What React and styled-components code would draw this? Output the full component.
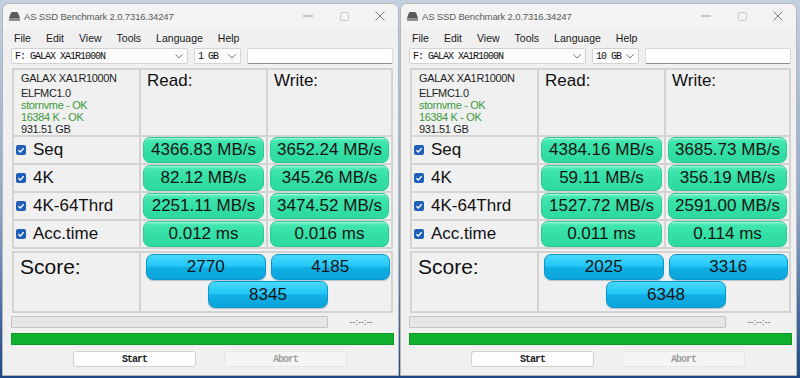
import React from "react";
import styled, { createGlobalStyle } from "styled-components";

const GlobalStyle = createGlobalStyle`
  html, body { margin: 0; padding: 0; }
  body {
    width: 800px;
    height: 378px;
    overflow: hidden;
    background: linear-gradient(180deg, #c3d0e0 0%, #8fa8c9 55%, #1d4785 100%);
    font-family: "Liberation Sans", Arial, sans-serif;
  }
`;

const Desktop = styled.div`
  display: flex;
  gap: 1px;
  padding: 3px 0 0 2px;
  height: 378px;
  box-sizing: border-box;
`;

const Window = styled.div`
  width: 397px;
  height: 373px;
  box-sizing: border-box;
  border: 1px solid #b6b6b6;
  border-radius: 7px 7px 0 0;
  background: #f0f0f0;
  display: flex;
  flex-direction: column;
  overflow: hidden;
`;

const TitleBar = styled.div`
  height: 24px;
  flex: none;
  display: flex;
  align-items: center;
  padding-left: 5px;
  background: #f3f3f3;
`;

const TitleText = styled.span`
  margin-left: 3px;
  font-size: 9.5px;
  letter-spacing: -0.15px;
  color: #5a5a5a;
  white-space: nowrap;
`;

const WindowControls = styled.div`
  margin-left: auto;
  display: flex;
  height: 100%;
`;

const ControlButton = styled.div`
  width: 36px;
  height: 100%;
  display: flex;
  align-items: center;
  justify-content: center;
`;

const MenuBar = styled.div`
  height: 19px;
  flex: none;
  display: flex;
  align-items: center;
  gap: 15px;
  padding-left: 11px;
  font-size: 10.5px;
  color: #1a1a1a;
`;

const MenuItem = styled.span``;

const SelectRow = styled.div`
  height: 16px;
  flex: none;
  margin-top: 1px;
  display: flex;
  gap: 6px;
  padding: 0 5px 0 8px;
`;

const Combo = styled.div`
  width: ${(p) => p.$w}px;
  height: 16px;
  box-sizing: border-box;
  border: 1px solid #d2d2d2;
  border-radius: 2px;
  background: #fcfcfc;
  display: flex;
  align-items: center;
  justify-content: space-between;
  padding: 0 4px 0 3px;
  font-family: "Liberation Mono", monospace;
  font-size: 10px;
  letter-spacing: -1px;
  color: #111;
  white-space: nowrap;
`;

const TextField = styled.div`
  flex: 1;
  height: 16px;
  box-sizing: border-box;
  border: 1px solid #dadada;
  border-bottom-color: #8c8c8c;
  border-radius: 2px;
  background: #fff;
`;

const ResultsTable = styled.div`
  margin: 4px 5px 0 9px;
  display: grid;
  grid-template-columns: 125px 125px 1fr;
  grid-template-rows: 65px repeat(4, 26px);
  gap: 2px;
  padding: 2px;
  background: #d3d3d3;
`;

const Cell = styled.div`
  background: #f0f0f0;
  min-width: 0;
`;

const InfoCell = styled(Cell)`
  padding: 2px 0 0 7px;
  font-size: 11px;
  letter-spacing: -0.35px;
  line-height: 12px;
  white-space: nowrap;
`;

const InfoLine = styled.div`
  color: ${(p) => (p.$ok ? "#3d9a3d" : "#1e1e1e")};
  margin-bottom: ${(p) => (p.$first ? 3 : 0)}px;
`;

const HeaderCell = styled(Cell)`
  padding: 1px 0 0 6px;
  font-size: 17px;
  line-height: 20px;
  color: #111;
`;

const LabelCell = styled(Cell)`
  display: flex;
  align-items: center;
  gap: 7px;
  padding-left: 2px;
  font-size: 17px;
  color: #111;
`;

const CheckIcon = styled.svg`
  flex: none;
`;

const ValueCell = styled(Cell)`
  padding: 0 2px;
  display: flex;
`;

const ValueBox = styled.div`
  flex: 1;
  height: 26px;
  box-sizing: border-box;
  border: 1px solid #2ccb95;
  border-radius: 7px;
  background: linear-gradient(180deg, #78f3cd 0%, #40e6ae 14%, #35e0a6 50%, #2dd99e 100%);
  box-shadow: inset 0 1px 0 rgba(255, 255, 255, 0.35);
  display: flex;
  align-items: center;
  justify-content: center;
  font-size: 17px;
  color: #141414;
  white-space: nowrap;
`;

const ScoreTable = styled.div`
  margin: 2px 5px 0 9px;
  display: grid;
  grid-template-columns: 125px 1fr;
  grid-template-rows: 58px;
  gap: 2px;
  padding: 2px;
  background: #d3d3d3;
`;

const ScoreLabel = styled(Cell)`
  padding: 2px 0 0 6px;
  font-size: 21px;
  line-height: 24px;
  color: #111;
`;

const ScoreGrid = styled(Cell)`
  display: grid;
  grid-template-columns: 1fr 1fr;
  grid-template-rows: 26px 27px;
  column-gap: 5px;
  row-gap: 1px;
  padding: 1px 1px 0 5px;
`;

const ScoreBox = styled.div`
  box-sizing: border-box;
  border: 1px solid #0b98cd;
  border-radius: 7px;
  background: linear-gradient(180deg, #4ad8fc 0%, #22c7f6 46%, #10aee4 54%, #0ba5dc 100%);
  box-shadow: 0 1px 1px rgba(0, 60, 100, 0.25);
  display: flex;
  align-items: center;
  justify-content: center;
  font-size: 17px;
  color: #141414;
  ${(p) => p.$total && "grid-column: 1 / span 2; justify-self: center; width: 120px;"}
`;

const ProgressRow = styled.div`
  margin: 3px 4px 0 8px;
  height: 12px;
  display: flex;
  align-items: center;
`;

const ProgressTrack = styled.div`
  width: 317px;
  height: 12px;
  box-sizing: border-box;
  border: 1px solid #c4c4c4;
  background: #e6e6e6;
  border-radius: 1px;
`;

const TimeText = styled.span`
  flex: 1;
  text-align: center;
  font-size: 9px;
  color: #666;
`;

const TotalBar = styled.div`
  margin: 5px 4px 0 8px;
  height: 12px;
  box-sizing: border-box;
  border: 1px solid #0c9a28;
  background: #12b02f;
`;

const ButtonRow = styled.div`
  margin-top: 6px;
  padding-left: 70px;
  display: flex;
  gap: 28px;
`;

const ActionButton = styled.div`
  width: 123px;
  height: 16px;
  box-sizing: border-box;
  border: 1px solid ${(p) => (p.$disabled ? "#e6e6e6" : "#d0d0d0")};
  border-radius: 3px;
  background: ${(p) => (p.$disabled ? "#f5f5f5" : "#fdfdfd")};
  display: flex;
  align-items: center;
  justify-content: center;
  font-family: "Liberation Mono", monospace;
  font-size: 10px;
  font-weight: bold;
  letter-spacing: -1px;
  color: ${(p) => (p.$disabled ? "#a0a0a0" : "#222")};
`;

const DriveIcon = () => (
  <svg width="13" height="11" viewBox="0 0 13 11">
    <path d="M1 7 L2.8 2 Q3.3 1 4.5 1 H8.5 Q9.7 1 10.2 2 L12 7 Z" fill="#5b5b5b" />
    <rect x="1" y="7" width="11" height="3" rx="0.5" fill="#8e8e8e" />
  </svg>
);

const Chevron = () => (
  <svg width="8" height="5" viewBox="0 0 8 5">
    <polyline points="0.5,0.5 4,4 7.5,0.5" fill="none" stroke="#7a7a7a" strokeWidth="1" />
  </svg>
);

const Check = () => (
  <CheckIcon width="10" height="10" viewBox="0 0 10 10">
    <rect width="10" height="10" rx="2" fill="#1f5fb8" />
    <path d="M2.4 5.2 L4.3 7 L7.6 3.2" stroke="#fff" strokeWidth="1.3" fill="none" />
  </CheckIcon>
);

const runs = [
  {
    size: "1 GB",
    results: [
      ["Seq", "4366.83 MB/s", "3652.24 MB/s"],
      ["4K", "82.12 MB/s", "345.26 MB/s"],
      ["4K-64Thrd", "2251.11 MB/s", "3474.52 MB/s"],
      ["Acc.time", "0.012 ms", "0.016 ms"],
    ],
    score: ["2770", "4185", "8345"],
  },
  {
    size: "10 GB",
    results: [
      ["Seq", "4384.16 MB/s", "3685.73 MB/s"],
      ["4K", "59.11 MB/s", "356.19 MB/s"],
      ["4K-64Thrd", "1527.72 MB/s", "2591.00 MB/s"],
      ["Acc.time", "0.011 ms", "0.114 ms"],
    ],
    score: ["2025", "3316", "6348"],
  },
];

const BenchWindow = ({ run }) => (
  <Window>
    <TitleBar>
      <DriveIcon />
      <TitleText>AS SSD Benchmark 2.0.7316.34247</TitleText>
      <WindowControls>
        <ControlButton>
          <svg width="10" height="2" viewBox="0 0 10 2">
            <line x1="0" y1="1" x2="10" y2="1" stroke="#959595" strokeWidth="1" />
          </svg>
        </ControlButton>
        <ControlButton>
          <svg width="9" height="9" viewBox="0 0 9 9">
            <rect x="0.5" y="0.5" width="8" height="8" rx="1" fill="none" stroke="#cacaca" strokeWidth="1" />
          </svg>
        </ControlButton>
        <ControlButton>
          <svg width="10" height="10" viewBox="0 0 10 10">
            <path d="M0.5 0.5 L9.5 9.5 M9.5 0.5 L0.5 9.5" stroke="#7c7c7c" strokeWidth="1" />
          </svg>
        </ControlButton>
      </WindowControls>
    </TitleBar>
    <MenuBar>
      {["File", "Edit", "View", "Tools", "Language", "Help"].map((m) => (
        <MenuItem key={m}>{m}</MenuItem>
      ))}
    </MenuBar>
    <SelectRow>
      <Combo $w={177}>
        <span>F: GALAX XA1R1000N</span>
        <Chevron />
      </Combo>
      <Combo $w={47}>
        <span>{run.size}</span>
        <Chevron />
      </Combo>
      <TextField />
    </SelectRow>
    <ResultsTable>
      <InfoCell>
        <InfoLine $first>GALAX XA1R1000N</InfoLine>
        <InfoLine>ELFMC1.0</InfoLine>
        <InfoLine $ok>stornvme - OK</InfoLine>
        <InfoLine $ok>16384 K - OK</InfoLine>
        <InfoLine>931.51 GB</InfoLine>
      </InfoCell>
      <HeaderCell>Read:</HeaderCell>
      <HeaderCell>Write:</HeaderCell>
      {run.results.map(([label, read, write]) => (
        <React.Fragment key={label}>
          <LabelCell>
            <Check />
            {label}
          </LabelCell>
          <ValueCell>
            <ValueBox>{read}</ValueBox>
          </ValueCell>
          <ValueCell>
            <ValueBox>{write}</ValueBox>
          </ValueCell>
        </React.Fragment>
      ))}
    </ResultsTable>
    <ScoreTable>
      <ScoreLabel>Score:</ScoreLabel>
      <ScoreGrid>
        <ScoreBox>{run.score[0]}</ScoreBox>
        <ScoreBox>{run.score[1]}</ScoreBox>
        <ScoreBox $total>{run.score[2]}</ScoreBox>
      </ScoreGrid>
    </ScoreTable>
    <ProgressRow>
      <ProgressTrack />
      <TimeText>--:--:--</TimeText>
    </ProgressRow>
    <TotalBar />
    <ButtonRow>
      <ActionButton>Start</ActionButton>
      <ActionButton $disabled>Abort</ActionButton>
    </ButtonRow>
  </Window>
);

export default function App() {
  return (
    <>
      <GlobalStyle />
      <Desktop>
        {runs.map((run) => (
          <BenchWindow key={run.size} run={run} />
        ))}
      </Desktop>
    </>
  );
}
